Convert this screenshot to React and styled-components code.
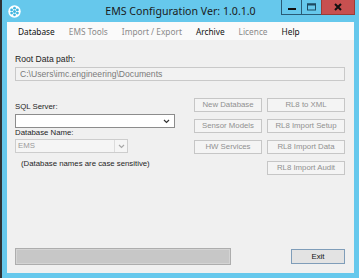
import styled, { createGlobalStyle } from "styled-components"

const menus = [
    { label: "Database", enabled: true },
    { label: "EMS Tools" },
    { label: "Import / Export" },
    { label: "Archive", enabled: true },
    { label: "Licence" },
    { label: "Help", enabled: true },
]

const leftButtons = ["New Database", "Sensor Models", "HW Services"]
const rightButtons = ["RL8 to XML", "RL8 Import Setup", "RL8 Import Data", "RL8 Import Audit"]

const Chevron = ({ color }) => (
    <svg width="7" height="5" viewBox="0 0 7 5">
        <path d="M1 1 L3.5 3.5 L6 1" fill="none" stroke={color} strokeWidth="1.2" />
    </svg>
)

const AppIcon = () => (
    <svg width="13" height="13" viewBox="0 0 13 13">
        <circle cx="6.5" cy="6.5" r="6.2" fill="#ffffff" />
        <circle cx="6.5" cy="6.5" r="1.5" fill="#3fb6e0" />
        <circle cx="6.5" cy="3.2" r="1.4" fill="#3fb6e0" />
        <circle cx="6.5" cy="9.8" r="1.4" fill="#3fb6e0" />
        <circle cx="3.6" cy="4.9" r="1.4" fill="#3fb6e0" />
        <circle cx="9.4" cy="4.9" r="1.4" fill="#3fb6e0" />
        <circle cx="3.6" cy="8.1" r="1.4" fill="#3fb6e0" />
        <circle cx="9.4" cy="8.1" r="1.4" fill="#3fb6e0" />
    </svg>
)

export default function App() {
    return (
        <>
            <GlobalStyle />
            <Window>
                <TitleBar>
                    <IconSlot><AppIcon /></IconSlot>
                    <Title>EMS Configuration Ver: 1.0.1.0</Title>
                    <Captions>
                        <CaptionButton $w={21}>
                            <svg width="8" height="8" viewBox="0 0 8 8"><rect x="0" y="5" width="8" height="2" fill="#111" /></svg>
                        </CaptionButton>
                        <CaptionButton $w={21}>
                            <svg width="9" height="8" viewBox="0 0 9 8"><rect x="0.5" y="1" width="8" height="6" fill="none" stroke="#1d4a63" strokeWidth="1" /><rect x="0" y="0.5" width="9" height="2" fill="#1d4a63" /></svg>
                        </CaptionButton>
                        <CaptionButton $w={34} $close>
                            <svg width="8" height="8" viewBox="0 0 8 8"><path d="M1 1 L7 7 M7 1 L1 7" stroke="#111" strokeWidth="2" /></svg>
                        </CaptionButton>
                    </Captions>
                </TitleBar>
                <Client>
                    <MenuBar>
                        {menus.map((m) => (
                            <MenuItem key={m.label} $enabled={m.enabled}>{m.label}</MenuItem>
                        ))}
                    </MenuBar>
                    <Content>
                        <Label $size={8.6}>Root Data path:</Label>
                        <PathBox>{"C:\\Users\\imc.engineering\\Documents"}</PathBox>
                        <MainRow>
                            <LeftColumn>
                                <Label>SQL Server:</Label>
                                <Combo $w={160} $mt={2}>
                                    <span></span>
                                    <Chevron color="#333" />
                                </Combo>
                                <Label>Database Name:</Label>
                                <Combo $w={113} $mt={1} $disabled>
                                    <span>EMS</span>
                                    <DropPart><Chevron color="#a8a8a8" /></DropPart>
                                </Combo>
                                <Note>(Database names are case sensitive)</Note>
                            </LeftColumn>
                            <Buttons>
                                <ButtonColumn $w={68}>
                                    {leftButtons.map((b) => <FormButton key={b} disabled>{b}</FormButton>)}
                                </ButtonColumn>
                                <ButtonColumn $w={78}>
                                    {rightButtons.map((b) => <FormButton key={b} disabled>{b}</FormButton>)}
                                </ButtonColumn>
                            </Buttons>
                        </MainRow>
                        <Footer>
                            <Progress />
                            <ExitButton>Exit</ExitButton>
                        </Footer>
                    </Content>
                </Client>
            </Window>
        </>
    )
}

const GlobalStyle = createGlobalStyle`
    html, body {
        margin: 0;
        padding: 0;
        background: #66c8ec;
    }
    * {
        box-sizing: border-box;
    }
`

const Window = styled.div`
    width: 359px;
    height: 278px;
    display: flex;
    flex-direction: column;
    background: #66c8ec;
    border-left: 2px solid #2e3134;
    overflow: hidden;
`

const TitleBar = styled.div`
    height: 22px;
    flex-shrink: 0;
    display: grid;
    grid-template-columns: 1fr auto 1fr;
`

const IconSlot = styled.div`
    padding: 5px 0 0 6px;
    display: flex;
    align-items: flex-start;
`

const Title = styled.div`
    font-family: "Noto Sans", sans-serif;
    font-size: 10.6px;
    line-height: 22px;
    color: #1a1a1a;
    white-space: nowrap;
`

const Captions = styled.div`
    justify-self: end;
    display: flex;
    margin-right: 4px;
    height: 15px;
`

const CaptionButton = styled.div`
    width: ${(p) => p.$w}px;
    height: 15px;
    display: flex;
    align-items: center;
    justify-content: center;
    background: ${(p) => (p.$close ? "#c75050" : "#66c8ec")};
    border: 1px solid ${(p) => (p.$close ? "#9a3c36" : "#2a5b76")};
    border-top: none;
    & + & {
        margin-left: -1px;
    }
`

const Client = styled.div`
    flex: 1;
    margin: 0 5px 5px 5px;
    background: #f0f0f0;
    display: flex;
    flex-direction: column;
`

const MenuBar = styled.div`
    height: 18px;
    flex-shrink: 0;
    display: flex;
    align-items: center;
    padding-left: 4px;
    background: #fafafa;
`

const MenuItem = styled.div`
    padding: 0 7px;
    font-family: "Noto Sans", sans-serif;
    font-size: 8.3px;
    color: ${(p) => (p.$enabled ? "#111" : "#8a8a8a")};
    white-space: nowrap;
`

const Content = styled.div`
    flex: 1;
    display: flex;
    flex-direction: column;
    padding: 14px 9px 8px 8px;
    font-family: "Liberation Sans", Arial, sans-serif;
    font-size: 7.8px;
`

const Label = styled.div`
    font-size: ${(p) => p.$size || 7.8}px;
    line-height: 10px;
    color: #1e1e1e;
    white-space: nowrap;
`

const PathBox = styled.div`
    margin-top: 3px;
    height: 14px;
    padding-left: 4px;
    font-size: 8.6px;
    line-height: 12px;
    background: #f2f2f2;
    border: 1px solid #c9c9c9;
    color: #7a7a7a;
`

const MainRow = styled.div`
    margin-top: 17px;
    display: flex;
    justify-content: space-between;
    align-items: flex-start;
`

const LeftColumn = styled.div`
    padding-top: 4px;
    display: flex;
    flex-direction: column;
`

const Combo = styled.div`
    width: ${(p) => p.$w}px;
    height: 14px;
    margin-top: ${(p) => p.$mt}px;
    display: flex;
    align-items: center;
    justify-content: space-between;
    padding-left: 2px;
    background: ${(p) => (p.$disabled ? "#f5f5f5" : "#ffffff")};
    border: 1px solid ${(p) => (p.$disabled ? "#cdcdcd" : "#8c8c8c")};
    color: #9a9a9a;
    padding-right: ${(p) => (p.$disabled ? 0 : 4)}px;
    line-height: 12px;
`

const DropPart = styled.div`
    width: 13px;
    height: 100%;
    border-left: 1px solid #dcdcdc;
    display: flex;
    align-items: center;
    justify-content: center;
`

const Note = styled.div`
    margin-top: 6px;
    padding-left: 6px;
    line-height: 10px;
    color: #1e1e1e;
    white-space: nowrap;
`

const Buttons = styled.div`
    display: flex;
    gap: 5px;
`

const ButtonColumn = styled.div`
    width: ${(p) => p.$w}px;
    display: flex;
    flex-direction: column;
    gap: 7px;
`

const FormButton = styled.button`
    height: 14px;
    padding: 0;
    font-family: "Liberation Sans", Arial, sans-serif;
    font-size: 7.8px;
    line-height: 12px;
    background: #f4f4f4;
    border: 1px solid #c6c6c6;
    color: #909090;
    white-space: nowrap;
`

const Footer = styled.div`
    margin-top: auto;
    display: flex;
    align-items: center;
    justify-content: space-between;
`

const Progress = styled.div`
    width: 216px;
    height: 17px;
    background: #c7c7c7;
    border: 1px solid #adadad;
    box-shadow: inset 0 0 0 1px #d4d4d4;
`

const ExitButton = styled.button`
    width: 54px;
    height: 15px;
    padding: 0;
    font-family: "Liberation Sans", Arial, sans-serif;
    font-size: 7.8px;
    line-height: 13px;
    background: #e3e3e3;
    border: 1px solid #7f9db9;
    color: #111;
`
